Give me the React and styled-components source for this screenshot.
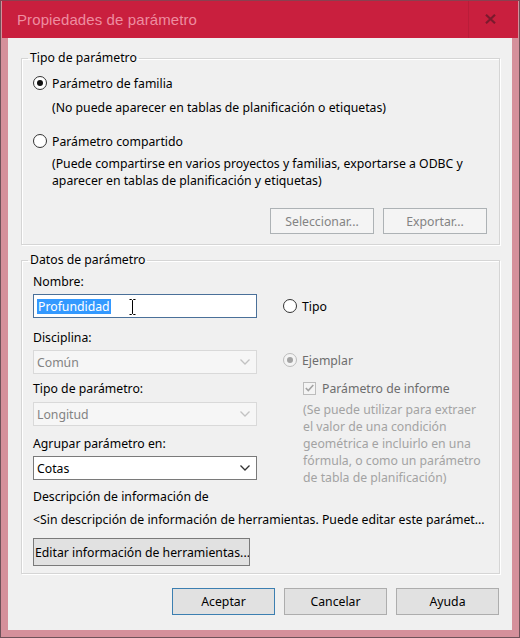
import React from 'react';
import styled, { createGlobalStyle } from 'styled-components';

const GlobalStyle = createGlobalStyle`
  html, body {
    margin: 0;
    padding: 0;
    background: #ffffff;
  }
  body {
    font-family: "Noto Sans", "Liberation Sans", Arial, sans-serif;
    font-size: 12.25px;
    color: #000000;
  }
`;

const Window = styled.div`
  width: 520px;
  height: 638px;
  box-sizing: border-box;
  border: 1px solid #6e5259;
  border-top-color: #8a4050;
  background: #d5909b;
  padding: 0 7px 7px 7px;
  display: flex;
  flex-direction: column;
`;

const TitleBar = styled.div`
  height: 37px;
  margin: 0 -6px 0 -6px;
  padding: 0 6px;
  background: #c91f3e;
  display: flex;
  align-items: center;
`;

const TitleText = styled.div`
  flex: 1;
  padding-left: 9px;
  font-family: "Liberation Sans", Arial, sans-serif;
  font-size: 15px;
  color: #ee8da0;
  letter-spacing: 0.1px;
  padding-bottom: 1px;
`;

const CloseButton = styled.div`
  width: 44px;
  align-self: stretch;
  display: flex;
  align-items: center;
  justify-content: center;
  border-left: 1px solid rgba(0, 0, 0, 0.07);
  padding-bottom: 2px;
  box-sizing: border-box;
`;

const Content = styled.div`
  flex: 1;
  background: #f0f0f0;
  padding: 12px 12px 0 13px;
  display: flex;
  flex-direction: column;
`;

const Group = styled.fieldset`
  margin: ${({ $top }) => $top || 0}px 0 0 0;
  padding: 0 12px ${({ $bottom }) => $bottom || 0}px 11px;
  border: 1px solid #d5d5d5;
  box-shadow: 1px 1px 0 #ffffff, inset 1px 1px 0 #ffffff;
  min-width: 0;
`;

const Legend = styled.legend`
  margin-left: -5px;
  padding: 0 2px;
  line-height: 16px;
`;

const RadioRow = styled.label`
  display: flex;
  align-items: center;
  gap: 5px;
  height: 16px;
  margin-top: ${({ $top }) => $top || 0}px;
  color: ${({ $muted }) => ($muted ? '#6d6d6d' : '#000000')};
`;

const RadioCircle = styled.span`
  width: 14px;
  height: 14px;
  box-sizing: border-box;
  border-radius: 50%;
  border: 1px solid ${({ $disabled }) => ($disabled ? '#bcbcbc' : '#333333')};
  background: ${({ $disabled }) => ($disabled ? '#f4f4f4' : '#ffffff')};
  display: inline-flex;
  align-items: center;
  justify-content: center;
  flex: none;
  &::after {
    content: '';
    width: 6px;
    height: 6px;
    border-radius: 50%;
    background: ${({ $disabled }) => ($disabled ? '#a3a3a3' : '#111111')};
    display: ${({ $checked }) => ($checked ? 'block' : 'none')};
  }
`;

const Note = styled.div`
  margin-top: ${({ $top }) => $top || 0}px;
  padding-left: 19px;
  line-height: ${({ $lh }) => $lh || 16}px;
`;

const ButtonRow = styled.div`
  display: flex;
  justify-content: flex-end;
  gap: ${({ $gap }) => $gap}px;
  margin-top: ${({ $top }) => $top || 0}px;
  padding-right: ${({ $right }) => $right || 0}px;
`;

const Button = styled.button`
  width: ${({ $w }) => $w || 103}px;
  height: ${({ $h }) => $h || 27}px;
  box-sizing: border-box;
  padding: 0 ${({ $left }) => ($left ? '1px' : '0')};
  font-family: inherit;
  font-size: inherit;
  white-space: nowrap;
  overflow: hidden;
  text-align: ${({ $left }) => ($left ? 'left' : 'center')};
  color: ${({ disabled }) => (disabled ? '#838383' : '#000000')};
  background: ${({ disabled }) => (disabled ? '#f4f4f4' : '#e1e1e1')};
  border: 1px solid
    ${({ disabled, $default, $dark }) =>
      disabled ? '#adb2b5' : $default ? '#3c7fb1' : $dark ? '#7a7a7a' : '#adadad'};
  border-radius: 0;
  margin-top: ${({ $top }) => $top || 0}px;
`;

const FieldsGrid = styled.div`
  display: grid;
  grid-template-columns: 224px 1fr;
  column-gap: 26px;
`;

const Column = styled.div`
  display: flex;
  flex-direction: column;
`;

const FieldLabel = styled.div`
  line-height: 16px;
  margin-top: ${({ $top }) => $top || 0}px;
  white-space: nowrap;
`;

const TextInput = styled.div`
  position: relative;
  height: 24px;
  box-sizing: border-box;
  margin-top: 4px;
  border: 1px solid #4a7099;
  background: #ffffff;
  display: flex;
  align-items: center;
  padding-left: 3px;
`;

const Selected = styled.span`
  background: #3399ff;
  color: #ffffff;
  line-height: 15px;
  padding: 0 1px;
`;

const Cursor = styled.svg`
  position: absolute;
  left: 95px;
  top: 4px;
`;

const Combo = styled.div`
  height: 24px;
  box-sizing: border-box;
  margin-top: ${({ $top }) => $top || 4}px;
  border: 1px solid ${({ $disabled }) => ($disabled ? '#d9d9d9' : '#7a7a7a')};
  background: ${({ $disabled }) => ($disabled ? '#f6f6f6' : '#ffffff')};
  color: ${({ $disabled }) => ($disabled ? '#838383' : '#000000')};
  display: flex;
  align-items: center;
  justify-content: space-between;
  padding: 0 6px 0 3px;
`;

const CheckRow = styled.div`
  display: flex;
  align-items: center;
  gap: 6px;
  height: 16px;
  margin-top: 12px;
  padding-left: 20px;
  color: #6d6d6d;
`;

const CheckBox = styled.span`
  width: 13px;
  height: 13px;
  box-sizing: border-box;
  border: 1px solid #bcbcbc;
  background: #f4f4f4;
  display: inline-flex;
  align-items: center;
  justify-content: center;
  flex: none;
`;

const HelpText = styled.div`
  margin-top: 5px;
  padding-left: 20px;
  line-height: 17px;
  color: #a3a3a3;
  white-space: nowrap;
`;

const Chevron = ({ color }) => (
  <svg width="10" height="6" viewBox="0 0 10 6">
    <path d="M0.5 0.5 L5 5 L9.5 0.5" fill="none" stroke={color} strokeWidth="1.3" />
  </svg>
);

export default function App() {
  return (
    <>
      <GlobalStyle />
      <Window>
        <TitleBar>
          <TitleText>Propiedades de parámetro</TitleText>
          <CloseButton>
            <svg width="11" height="10" viewBox="0 0 11 10">
              <path d="M1 0.8 L10 9.2 M10 0.8 L1 9.2" stroke="#7b1a2d" strokeWidth="2.2" />
            </svg>
          </CloseButton>
        </TitleBar>
        <Content>
          <Group $bottom={10}>
            <Legend>Tipo de parámetro</Legend>
            <RadioRow $top={9}>
              <RadioCircle $checked />
              Parámetro de familia
            </RadioRow>
            <Note $top={9}>(No puede aparecer en tablas de planificación o etiquetas)</Note>
            <RadioRow $top={17}>
              <RadioCircle />
              Parámetro compartido
            </RadioRow>
            <Note $top={6} $lh={17}>
              (Puede compartirse en varios proyectos y familias, exportarse a ODBC y
              <br />
              aparecer en tablas de planificación y etiquetas)
            </Note>
            <ButtonRow $gap={9} $top={19}>
              <Button disabled $w={104} $h={26}>Seleccionar...</Button>
              <Button disabled $w={104} $h={26}>Exportar...</Button>
            </ButtonRow>
          </Group>

          <Group $top={7} $bottom={7}>
            <Legend>Datos de parámetro</Legend>
            <FieldsGrid>
              <Column>
                <FieldLabel $top={6}>Nombre:</FieldLabel>
                <TextInput>
                  <Selected>Profundidad</Selected>
                  <Cursor width="7" height="16" viewBox="0 0 7 16">
                    <path d="M0.5 0.5 H2.5 L3.5 1.5 L4.5 0.5 H6.5 M3.5 1.5 V14.5 M0.5 15.5 H2.5 L3.5 14.5 L4.5 15.5 H6.5" fill="none" stroke="#000" strokeWidth="1" />
                  </Cursor>
                </TextInput>
                <FieldLabel $top={12}>Disciplina:</FieldLabel>
                <Combo $disabled>
                  Común
                  <Chevron color="#c2c2c2" />
                </Combo>
                <FieldLabel $top={7}>Tipo de parámetro:</FieldLabel>
                <Combo $disabled $top={5}>
                  Longitud
                  <Chevron color="#c2c2c2" />
                </Combo>
                <FieldLabel $top={10}>Agrupar parámetro en:</FieldLabel>
                <Combo>
                  Cotas
                  <Chevron color="#333333" />
                </Combo>
              </Column>
              <Column>
                <RadioRow $top={30}>
                  <RadioCircle />
                  Tipo
                </RadioRow>
                <RadioRow $top={38} $muted>
                  <RadioCircle $checked $disabled />
                  Ejemplar
                </RadioRow>
                <CheckRow>
                  <CheckBox>
                    <svg width="9" height="8" viewBox="0 0 9 8">
                      <path d="M0.8 4 L3.3 6.5 L8.3 1" fill="none" stroke="#a3a3a3" strokeWidth="1.6" />
                    </svg>
                  </CheckBox>
                  Parámetro de informe
                </CheckRow>
                <HelpText>
                  (Se puede utilizar para extraer
                  <br />
                  el valor de una condición
                  <br />
                  geométrica e incluirlo en una
                  <br />
                  fórmula, o como un parámetro
                  <br />
                  de tabla de planificación)
                </HelpText>
              </Column>
            </FieldsGrid>
            <FieldLabel $top={3}>Descripción de información de</FieldLabel>
            <FieldLabel $top={7}>
              &lt;Sin descripción de información de herramientas. Puede editar este parámet...
            </FieldLabel>
            <Button $w={217} $h={28} $top={10} $left $dark>
              Editar información de herramientas...
            </Button>
          </Group>

          <ButtonRow $gap={9} $top={14} $right={1}>
            <Button $default>Aceptar</Button>
            <Button>Cancelar</Button>
            <Button>Ayuda</Button>
          </ButtonRow>
        </Content>
      </Window>
    </>
  );
}
